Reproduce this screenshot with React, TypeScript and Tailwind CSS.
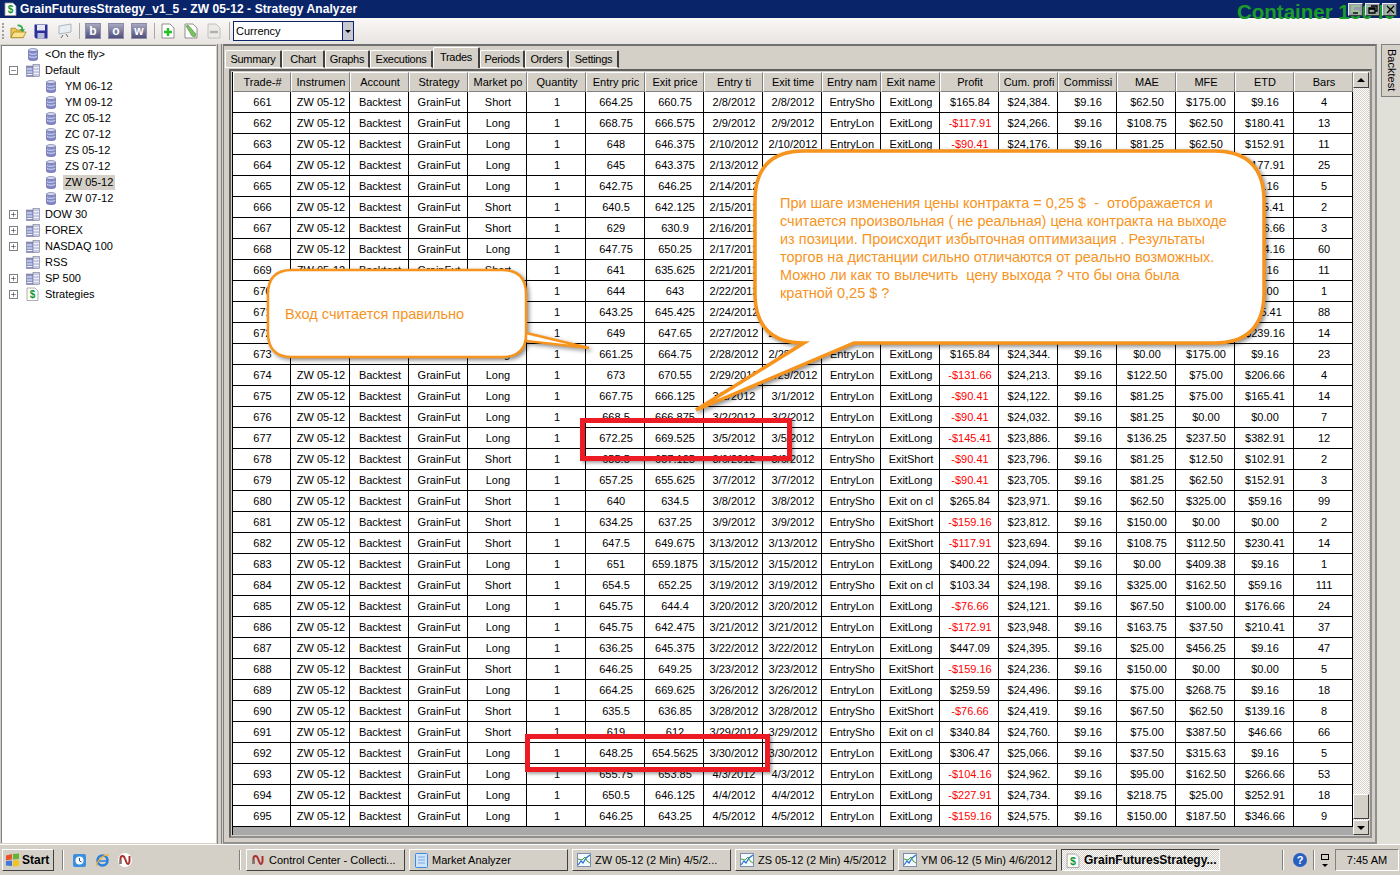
import { Minus, Plus } from "lucide-react";

// id, position, entry, exit, entry time, exit time, entry name, exit name, profit, cum, mae, mfe, etd, bars
const trades: string[][] = [
  ["661", "Short", "664.25", "660.75", "2/8/2012", "2/8/2012", "EntrySho", "ExitLong", "$165.84", "$24,384.", "$62.50", "$175.00", "$9.16", "4"],
  ["662", "Long", "668.75", "666.575", "2/9/2012", "2/9/2012", "EntryLon", "ExitLong", "-$117.91", "$24,266.", "$108.75", "$62.50", "$180.41", "13"],
  ["663", "Long", "648", "646.375", "2/10/2012", "2/10/2012", "EntryLon", "ExitLong", "-$90.41", "$24,176.", "$81.25", "$62.50", "$152.91", "11"],
  ["664", "Long", "645", "643.375", "2/13/2012", "2/13/2012", "EntryLon", "ExitLong", "-$90.41", "$24,086.", "$81.25", "$87.50", "$177.91", "25"],
  ["665", "Long", "642.75", "646.25", "2/14/2012", "2/14/2012", "EntryLon", "ExitLong", "$165.84", "$24,252.", "$25.00", "$175.00", "$9.16", "5"],
  ["666", "Short", "640.5", "642.125", "2/15/2012", "2/15/2012", "EntrySho", "ExitShort", "-$90.41", "$24,161.", "$81.25", "$25.00", "$115.41", "2"],
  ["667", "Short", "629", "630.9", "2/16/2012", "2/16/2012", "EntrySho", "ExitShort", "-$104.16", "$24,057.", "$95.00", "$62.50", "$166.66", "3"],
  ["668", "Long", "647.75", "650.25", "2/17/2012", "2/17/2012", "EntryLon", "ExitLong", "$115.84", "$24,173.", "$50.00", "$125.00", "$134.16", "60"],
  ["669", "Short", "641", "635.625", "2/21/2012", "2/21/2012", "EntrySho", "ExitShort", "$259.59", "$24,432.", "$12.50", "$268.75", "$9.16", "11"],
  ["670", "Long", "644", "643", "2/22/2012", "2/22/2012", "EntryLon", "ExitLong", "-$59.16", "$24,373.", "$50.00", "$0.00", "$0.00", "1"],
  ["671", "Short", "643.25", "645.425", "2/24/2012", "2/24/2012", "EntrySho", "ExitShort", "-$117.91", "$24,255.", "$108.75", "$12.50", "$95.41", "88"],
  ["672", "Long", "649", "647.65", "2/27/2012", "2/27/2012", "EntryLon", "ExitLong", "-$76.66", "$24,178.", "$67.50", "$162.50", "$239.16", "14"],
  ["673", "Long", "661.25", "664.75", "2/28/2012", "2/28/2012", "EntryLon", "ExitLong", "$165.84", "$24,344.", "$0.00", "$175.00", "$9.16", "23"],
  ["674", "Long", "673", "670.55", "2/29/2012", "2/29/2012", "EntryLon", "ExitLong", "-$131.66", "$24,213.", "$122.50", "$75.00", "$206.66", "4"],
  ["675", "Long", "667.75", "666.125", "3/1/2012", "3/1/2012", "EntryLon", "ExitLong", "-$90.41", "$24,122.", "$81.25", "$75.00", "$165.41", "14"],
  ["676", "Long", "668.5", "666.875", "3/2/2012", "3/2/2012", "EntryLon", "ExitLong", "-$90.41", "$24,032.", "$81.25", "$0.00", "$0.00", "7"],
  ["677", "Long", "672.25", "669.525", "3/5/2012", "3/5/2012", "EntryLon", "ExitLong", "-$145.41", "$23,886.", "$136.25", "$237.50", "$382.91", "12"],
  ["678", "Short", "655.5", "657.125", "3/6/2012", "3/6/2012", "EntrySho", "ExitShort", "-$90.41", "$23,796.", "$81.25", "$12.50", "$102.91", "2"],
  ["679", "Long", "657.25", "655.625", "3/7/2012", "3/7/2012", "EntryLon", "ExitLong", "-$90.41", "$23,705.", "$81.25", "$62.50", "$152.91", "3"],
  ["680", "Short", "640", "634.5", "3/8/2012", "3/8/2012", "EntrySho", "Exit on cl", "$265.84", "$23,971.", "$62.50", "$325.00", "$59.16", "99"],
  ["681", "Short", "634.25", "637.25", "3/9/2012", "3/9/2012", "EntrySho", "ExitShort", "-$159.16", "$23,812.", "$150.00", "$0.00", "$0.00", "2"],
  ["682", "Short", "647.5", "649.675", "3/13/2012", "3/13/2012", "EntrySho", "ExitShort", "-$117.91", "$23,694.", "$108.75", "$112.50", "$230.41", "14"],
  ["683", "Long", "651", "659.1875", "3/15/2012", "3/15/2012", "EntryLon", "ExitLong", "$400.22", "$24,094.", "$0.00", "$409.38", "$9.16", "1"],
  ["684", "Short", "654.5", "652.25", "3/19/2012", "3/19/2012", "EntrySho", "Exit on cl", "$103.34", "$24,198.", "$325.00", "$162.50", "$59.16", "111"],
  ["685", "Long", "645.75", "644.4", "3/20/2012", "3/20/2012", "EntryLon", "ExitLong", "-$76.66", "$24,121.", "$67.50", "$100.00", "$176.66", "24"],
  ["686", "Long", "645.75", "642.475", "3/21/2012", "3/21/2012", "EntryLon", "ExitLong", "-$172.91", "$23,948.", "$163.75", "$37.50", "$210.41", "37"],
  ["687", "Long", "636.25", "645.375", "3/22/2012", "3/22/2012", "EntryLon", "ExitLong", "$447.09", "$24,395.", "$25.00", "$456.25", "$9.16", "47"],
  ["688", "Short", "646.25", "649.25", "3/23/2012", "3/23/2012", "EntrySho", "ExitShort", "-$159.16", "$24,236.", "$150.00", "$0.00", "$0.00", "5"],
  ["689", "Long", "664.25", "669.625", "3/26/2012", "3/26/2012", "EntryLon", "ExitLong", "$259.59", "$24,496.", "$75.00", "$268.75", "$9.16", "18"],
  ["690", "Short", "635.5", "636.85", "3/28/2012", "3/28/2012", "EntrySho", "ExitShort", "-$76.66", "$24,419.", "$67.50", "$62.50", "$139.16", "8"],
  ["691", "Short", "619", "612", "3/29/2012", "3/29/2012", "EntrySho", "Exit on cl", "$340.84", "$24,760.", "$75.00", "$387.50", "$46.66", "66"],
  ["692", "Long", "648.25", "654.5625", "3/30/2012", "3/30/2012", "EntryLon", "ExitLong", "$306.47", "$25,066.", "$37.50", "$315.63", "$9.16", "5"],
  ["693", "Long", "655.75", "653.85", "4/3/2012", "4/3/2012", "EntryLon", "ExitLong", "-$104.16", "$24,962.", "$95.00", "$162.50", "$266.66", "53"],
  ["694", "Long", "650.5", "646.125", "4/4/2012", "4/4/2012", "EntryLon", "ExitLong", "-$227.91", "$24,734.", "$218.75", "$25.00", "$252.91", "18"],
  ["695", "Long", "646.25", "643.25", "4/5/2012", "4/5/2012", "EntryLon", "ExitLong", "-$159.16", "$24,575.", "$150.00", "$187.50", "$346.66", "9"],
];

const headers = ["Trade-#", "Instrumen", "Account", "Strategy", "Market po", "Quantity", "Entry pric", "Exit price", "Entry ti", "Exit time", "Entry nam", "Exit name", "Profit", "Cum. profi", "Commissi", "MAE", "MFE", "ETD", "Bars"];

const tabs = [
  { label: "Summary", width: "w-[57px]" },
  { label: "Chart", width: "w-[43px]" },
  { label: "Graphs", width: "w-[45px]" },
  { label: "Executions", width: "w-[63px]" },
  { label: "Trades", width: "w-[47px]", active: true },
  { label: "Periods", width: "w-[45px]" },
  { label: "Orders", width: "w-[44px]" },
  { label: "Settings", width: "w-[50px]" },
];

const treeItems = [
  { label: "<On the fly>", icon: "db", depth: 0 },
  { label: "Default", icon: "group", depth: 0, toggle: "minus" },
  { label: "YM 06-12", icon: "db", depth: 1 },
  { label: "YM 09-12", icon: "db", depth: 1 },
  { label: "ZC 05-12", icon: "db", depth: 1 },
  { label: "ZC 07-12", icon: "db", depth: 1 },
  { label: "ZS 05-12", icon: "db", depth: 1 },
  { label: "ZS 07-12", icon: "db", depth: 1 },
  { label: "ZW 05-12", icon: "db", depth: 1, selected: true },
  { label: "ZW 07-12", icon: "db", depth: 1 },
  { label: "DOW 30", icon: "group", depth: 0, toggle: "plus" },
  { label: "FOREX", icon: "group", depth: 0, toggle: "plus" },
  { label: "NASDAQ 100", icon: "group", depth: 0, toggle: "plus" },
  { label: "RSS", icon: "group", depth: 0 },
  { label: "SP 500", icon: "group", depth: 0, toggle: "plus" },
  { label: "Strategies", icon: "dollar", depth: 0, toggle: "plus" },
];

function DbIcon() {
  return (
    <svg width="10" height="13" viewBox="0 0 10 13">
      <path d="M0.5 2v9c0 1 2 1.500 4.500 1.500S9.500 12 9.500 11V2z" fill="#8088c8" stroke="#5a6298" strokeWidth="0.6" />
      <ellipse cx="5" cy="2" rx="4.500" ry="1.500" fill="#d8dcf4" stroke="#5a6298" strokeWidth="0.6" />
      <path d="M1 5.500c1 1 7 1 8 0M1 8.500c1 1 7 1 8 0" fill="none" stroke="#dfe2f5" strokeWidth="0.9" />
    </svg>
  );
}

function GroupIcon() {
  return (
    <svg width="14" height="13" viewBox="0 0 14 13">
      <rect x="0.500" y="2" width="6.500" height="10.500" fill="#8c94c8" stroke="#667" strokeWidth="0.5" />
      <rect x="7" y="0.500" width="6.500" height="12" fill="#c6cae6" stroke="#667" strokeWidth="0.5" />
      <path d="M1 5h5.500M1 8h5.500M1 10.500h5.500M7.500 3.500H13M7.500 6.500H13M7.500 9.500H13" stroke="#eef" strokeWidth="1" />
    </svg>
  );
}

function DollarDoc({ size = 14 }: { size?: number }) {
  return (
    <svg width={size - 1} height={size} viewBox="0 0 13 14">
      <path d="M1 1h8l3 3v9.500H1z" fill="#fff" stroke="#9a9a9a" strokeWidth="0.8" />
      <text x="6.500" y="11" textAnchor="middle" fontSize="10" fontWeight="700" fill="#109a30" fontFamily="Liberation Sans">$</text>
    </svg>
  );
}

function Expander({ kind }: { kind: string }) {
  return (
    <span className="flex h-[9px] w-[9px] items-center justify-center border border-[#808080] bg-white text-black">
      {kind === "plus" ? <Plus size={7} strokeWidth={1.500} /> : <Minus size={7} strokeWidth={1.500} />}
    </span>
  );
}

function TreeRow({ item }: { item: (typeof treeItems)[number] }) {
  return (
    <div className="flex h-4 items-center">
      <span className="ml-[7px] flex w-[17px] shrink-0 items-center">{item.toggle && <Expander kind={item.toggle} />}</span>
      {item.depth === 1 && <span className="w-[20px] shrink-0" />}
      <span className="flex w-[17px] shrink-0 justify-start">
        {item.icon === "db" && <span className={item.depth === 0 ? "ml-[2px]" : ""}><DbIcon /></span>}
        {item.icon === "group" && <GroupIcon />}
        {item.icon === "dollar" && <DollarDoc />}
      </span>
      <span className={`whitespace-nowrap px-[2px] leading-[15px] ${item.selected ? "bg-[#d4d0c8]" : ""}`}>{item.label}</span>
    </div>
  );
}

function LetterButton({ letter }: { letter: string }) {
  return (
    <span className="flex h-[16px] w-[16px] items-center justify-center border border-[#8c8ca8] bg-gradient-to-b from-[#a8a8c0] to-[#50507c] text-[12px] font-bold leading-none text-white">
      {letter}
    </span>
  );
}

function DocIcon({ mark }: { mark: "plus" | "pencil" | "minus" }) {
  const disabled = mark === "minus";
  return (
    <svg width="14" height="16" viewBox="0 0 14 16">
      <path d="M1 1h8l4 4v10H1z" fill={disabled ? "#eceae6" : "#fff"} stroke={disabled ? "#b8b8b8" : "#777"} strokeWidth="0.8" />
      {mark === "plus" && <path d="M7 5v8M3 9h8" stroke="#22c020" strokeWidth="2.400" />}
      {mark === "minus" && <path d="M3 9h8" stroke="#b0b0b0" strokeWidth="2.400" />}
      {mark === "pencil" && <path d="M2 3l2-1 8 9-1 3-3-1z" fill="#7cc060" stroke="#4a8a3a" strokeWidth="0.6" />}
    </svg>
  );
}

function ChartIcon() {
  return (
    <svg width="14" height="14" viewBox="0 0 14 14">
      <rect x="0.500" y="0.500" width="13" height="13" fill="#f4f8ff" stroke="#7a8fb0" />
      <path d="M1 12l3-4 2 2 3-5 4-3" fill="none" stroke="#2a6fd0" strokeWidth="1.200" />
      <path d="M1 6l4 1 3-3 2 4 3 2" fill="none" stroke="#3ca040" strokeWidth="1" />
    </svg>
  );
}

function NinjaIcon({ ring }: { ring?: boolean }) {
  return (
    <svg width="14" height="14" viewBox="0 0 14 14">
      {ring && <circle cx="7" cy="7" r="7" fill="#fff" />}
      <path d="M2.500 11V5.500C2.500 2 6 2 7 5.500l1.500 4C9.500 12 11.500 11 11.500 8V3" fill="none" stroke="#a83230" strokeWidth="2" />
      <path d="M2.500 11V7" stroke="#777" strokeWidth="2" />
    </svg>
  );
}

function StartFlag() {
  return (
    <svg width="15" height="14" viewBox="0 0 15 14">
      <path d="M1 2.500l6-1.500v5.500l-6 .8z" fill="#e8532b" />
      <path d="M8 1l6-.5v5.500l-6 .5z" fill="#66b32e" />
      <path d="M1 8l6-.5v5.500l-6-.5z" fill="#3f78d8" />
      <path d="M8 7.500l6-.5v6l-6 .5z" fill="#f4c21e" />
    </svg>
  );
}

function TaskButton({ icon, label, active }: { icon: React.ReactNode; label: string; active?: boolean }) {
  return (
    <div
      className={`flex h-[22px] w-[159px] shrink-0 items-center gap-[3px] overflow-hidden whitespace-nowrap pl-[3px] ${
        active
          ? "border border-t-[#404040] border-l-[#404040] border-r-white border-b-white bg-[repeating-conic-gradient(#d4d0c8_0_25%,#ffffff_0_50%)] bg-[length:2px_2px] text-[12px] font-bold"
          : "border border-t-white border-l-white border-r-[#404040] border-b-[#404040] bg-[#d4d0c8]"
      }`}
    >
      <span className="flex w-[16px] shrink-0 justify-center">{icon}</span>
      <span>{label}</span>
    </div>
  );
}

function Cell({ children, red, wide }: { children: React.ReactNode; red?: boolean; wide?: string }) {
  return (
    <div className={`flex shrink-0 items-center justify-center overflow-hidden whitespace-nowrap border-r border-black pl-[2px] ${wide ?? "w-[59px]"} ${red ? "text-[#ff0000]" : ""}`}>
      {children}
    </div>
  );
}

function TradeRow({ t }: { t: string[] }) {
  const [id, pos, entry, exit, entryT, exitT, entryN, exitN, profit, cum, mae, mfe, etd, bars] = t;
  return (
    <div className="flex h-[21px] border-b border-black bg-white">
      <Cell wide="w-[58px]">{id}</Cell>
      <Cell>ZW 05-12</Cell>
      <Cell>Backtest</Cell>
      <Cell>GrainFut</Cell>
      <Cell>{pos}</Cell>
      <Cell>1</Cell>
      <Cell>{entry}</Cell>
      <Cell>{exit}</Cell>
      <Cell>{entryT}</Cell>
      <Cell>{exitT}</Cell>
      <Cell>{entryN}</Cell>
      <Cell>{exitN}</Cell>
      <Cell red={profit.startsWith("-")}>{profit}</Cell>
      <Cell>{cum}</Cell>
      <Cell>$9.16</Cell>
      <Cell>{mae}</Cell>
      <Cell>{mfe}</Cell>
      <Cell>{etd}</Cell>
      <Cell>{bars}</Cell>
    </div>
  );
}

const raised = "border border-t-white border-l-white border-r-[#404040] border-b-[#404040] bg-[#d4d0c8]";

function ScrollBar() {
  return (
    <div className="flex w-[16px] shrink-0 flex-col bg-[repeating-conic-gradient(#d4d0c8_0_25%,#ffffff_0_50%)] bg-[length:2px_2px]">
      <div className={`flex h-[16px] items-center justify-center ${raised}`}>
        <span className="h-0 w-0 border-x-[4px] border-b-[4px] border-x-transparent border-b-black" />
      </div>
      <div className="flex-1" />
      <div className={`h-[25px] ${raised}`} />
      <div className={`mt-[1px] flex h-[15px] items-center justify-center ${raised}`}>
        <span className="h-0 w-0 border-x-[4px] border-t-[4px] border-x-transparent border-t-black" />
      </div>
    </div>
  );
}

function SmallCallout() {
  return (
    <div className="absolute left-[260px] top-[262px] h-[110px] w-[340px]">
      <svg width="340" height="110" viewBox="0 0 340 110" className="absolute inset-0 drop-shadow-[2px_2px_2px_rgba(0,0,0,0.45)]">
        <path
          d="M32 8H242Q266 8 266 32V71L329 86L266 79V72Q266 95 242 95H32Q8 95 8 71V32Q8 8 32 8Z"
          fill="#fff"
          stroke="#f7941e"
          strokeWidth="2.500"
        />
      </svg>
      <div className="absolute left-[25px] top-[43px] whitespace-pre text-[14.500px] leading-[18px] text-[#f7941e]">Вход считается правильно</div>
    </div>
  );
}

function BigCallout() {
  return (
    <div className="absolute left-[690px] top-[140px] h-[280px] w-[590px]">
      <svg width="590" height="280" viewBox="0 0 590 280" className="absolute inset-0 drop-shadow-[2px_2px_2px_rgba(0,0,0,0.45)]">
        <path
          d="M114 11H524Q574 11 574 61V153Q574 203 524 203H164L6 270L114 203Q65 203 65 153V61Q65 11 114 11Z"
          fill="#fff"
          stroke="#f7941e"
          strokeWidth="3.500"
        />
      </svg>
      <div className="absolute left-[90px] top-[54px] whitespace-pre text-[14.500px] leading-[18px] text-[#f7941e]">
        {"При шаге изменения цены контракта = 0,25 $  -  отображается и\nсчитается произвольная ( не реальная) цена контракта на выходе\nиз позиции. Происходит избыточная оптимизация . Результаты\nторгов на дистанции сильно отличаются от реально возможных.\nМожно ли как то вылечить  цену выхода ? что бы она была\nкратной 0,25 $ ?"}
      </div>
    </div>
  );
}

export default function App() {
  return (
    <div className="relative flex h-[875px] w-[1400px] flex-col overflow-hidden bg-[#d4d0c8] text-[11px] leading-none text-black [font-family:'Liberation_Sans',Arial,sans-serif]">
      {/* title bar */}
      <div className="relative flex h-[18px] shrink-0 items-center gap-[3px] bg-[#0a246a] pl-[4px]">
        <DollarDoc size={14} />
        <span className="whitespace-nowrap text-[12px] font-bold tracking-[0.1px] text-white">GrainFuturesStrategy_v1_5 - ZW 05-12 - Strategy Analyzer</span>
        <span className="absolute left-[1237px] top-[1px] whitespace-nowrap text-[20.500px] font-bold leading-[22px] text-[#1a9c2a]">Container 15040</span>
        <div className="absolute right-[3px] top-[3px] flex gap-[2px]">
          {[
            "M3 9h5",
            "M4 2h6v5H8M2 4h6v5H2zM2 5h6",
            "M3 2l7 7M10 2l-7 7",
          ].map((d) => (
            <span key={d} className="flex h-[13px] w-[15px] items-center justify-center border border-t-white/80 border-l-white/80 border-r-[#404040] border-b-[#404040] bg-[#d4d0c8]/70">
              <svg width="12" height="11" viewBox="0 0 12 11">
                <path d={d} fill="none" stroke="#000" strokeWidth="1.300" />
              </svg>
            </span>
          ))}
        </div>
      </div>

      {/* toolbar */}
      <div className="flex h-[26px] shrink-0 items-center bg-gradient-to-b from-[#faf8f6] to-[#e8e4e2] pl-[2px]">
        <span className="mr-[6px] h-[16px] w-[2px] border-l-2 border-dotted border-[#a0a0a0]" />
        <svg width="17" height="17" viewBox="0 0 18 17" className="mr-[7px]">
          <path d="M1 5h5l1 2h7v8H1z" fill="#f0c850" stroke="#a08020" strokeWidth="0.8" />
          <path d="M1 15l3-6h13l-3 6z" fill="#fbe38c" stroke="#a08020" strokeWidth="0.8" />
          <path d="M8 1c4 0 6 2 6 5h2l-3 3-3-3h2c0-2-1-3-4-3z" fill="#2fa84a" />
        </svg>
        <svg width="14" height="15" viewBox="0 0 14 15" className="mr-[10px]">
          <path d="M0.500 0.500h13v14H2l-1.500-1.500z" fill="#2a2f9a" />
          <rect x="3" y="1" width="8" height="5.500" fill="#e8e8f4" />
          <rect x="3.500" y="9" width="7" height="5.500" fill="#b8bcd8" />
        </svg>
        <svg width="14" height="16" viewBox="0 0 14 16" className="mr-[7px]">
          <path d="M1 3l12-2v8l-12 2z" fill="#e8eef4" stroke="#a0a8b0" strokeWidth="0.8" />
          <path d="M5 12l-2 3M8 11l2 3" stroke="#666" strokeWidth="1" />
        </svg>
        <span className="mr-[5px] h-[16px] w-px bg-[#a8a8a8]" />
        <div className="flex gap-[7px]">
          <LetterButton letter="b" />
          <LetterButton letter="o" />
          <LetterButton letter="w" />
        </div>
        <span className="ml-[7px] mr-[6px] h-[16px] w-px bg-[#a8a8a8]" />
        <div className="flex gap-[9px]">
          <DocIcon mark="plus" />
          <DocIcon mark="pencil" />
          <DocIcon mark="minus" />
        </div>
        <span className="ml-[8px] mr-[3px] h-[18px] w-px bg-[#a8a8a8]" />
        <div className="flex h-[20px] w-[121px] items-center border border-[#0a246a] bg-white pl-[2px]">
          <span className="flex-1">Currency</span>
          <span className="flex h-full w-[11px] items-center justify-center border-l border-[#0a246a] bg-[#c8c8d0]">
            <span className="h-0 w-0 border-x-[3px] border-t-[3px] border-x-transparent border-t-black" />
          </span>
        </div>
      </div>

      {/* main area */}
      <div className="flex h-[800px] shrink-0">
        <div className="ml-[1px] mt-[1px] h-[798px] w-[215px] shrink-0 border-l border-t border-[#808080] bg-white">
          {treeItems.map((item) => (
            <TreeRow key={item.label} item={item} />
          ))}
        </div>
        <div className="mx-[1px] w-[5px] shrink-0 border-x border-[#808080]" />

        <div className="flex w-[1154px] shrink-0 flex-col border-l border-t-2 border-r-2 border-b-2 border-t-[#707070] border-l-[#808080] border-r-[#909090] border-b-[#909090] pl-[2px]">
          <div className="-ml-[1px] flex h-[22px] shrink-0 items-end tracking-[-0.3px]">
            {tabs.map((tab) =>
              tab.active ? (
                <div key={tab.label} className={`relative z-10 flex h-[21px] ${tab.width} shrink-0 items-start justify-center rounded-t-[2px] border-l border-t border-r-2 border-white border-r-[#404040] bg-[#d4d0c8] pt-[4px]`}>
                  {tab.label}
                </div>
              ) : (
                <div key={tab.label} className={`flex h-[18px] ${tab.width} shrink-0 items-center justify-center rounded-t-[2px] border-b border-l border-t border-r-2 border-white border-r-[#404040] bg-[#d4d0c8]`}>
                  {tab.label}
                </div>
              ),
            )}
          </div>
          <div className="ml-[3px] mt-[1px] flex h-[769px] w-[1143px] flex-col border-2 border-t-[#606060] border-l-[#606060] border-r-[#909090] border-b-[#909090] p-[1px]">
            <div className="flex h-[763px]">
              <div className="flex w-[1121px] shrink-0 flex-col border-l border-black bg-[#a9a9a9]">
                <div className="flex h-[20px] shrink-0">
                  {headers.map((h, i) => (
                    <div key={h} className={`flex shrink-0 items-center justify-center overflow-hidden whitespace-nowrap border border-t-white border-l-white border-r-[#808080] border-b-[#808080] bg-[#d4d0c8] pl-[1px] ${i === 0 ? "w-[58px]" : "w-[59px]"}`}>
                      {h}
                    </div>
                  ))}
                </div>
                {trades.map((t) => (
                  <TradeRow key={t[0]} t={t} />
                ))}
              </div>
              <ScrollBar />
            </div>
          </div>
        </div>

        <div className="flex-1 bg-[#e0dfd8] pl-[4px]">
          <div className="flex h-[53px] w-[19px] items-center justify-center border-b border-l border-t border-[#808080] bg-[#d4d0c8] [writing-mode:vertical-rl]">Backtest</div>
        </div>
      </div>

      {/* taskbar */}
      <div className="flex h-[31px] shrink-0 items-center border-t border-white bg-[#d4d0c8]">
        <div className="ml-[2px] flex h-[22px] w-[52px] items-center gap-[2px] border border-t-white border-l-white border-r-[#404040] border-b-[#404040] pl-[2px] text-[12px] font-bold">
          <StartFlag />
          <span>Start</span>
        </div>
        <span className="ml-[8px] h-[20px] w-[2px] border-l border-r border-l-[#808080] border-r-white" />
        <div className="ml-[8px] flex w-[61px] items-center gap-[8px]">
          <svg width="15" height="15" viewBox="0 0 15 15">
            <rect x="1" y="1" width="13" height="13" rx="2" fill="#3a8fe0" />
            <circle cx="7.500" cy="7.500" r="4" fill="#fff" />
            <path d="M7.500 5v3l2 1" fill="none" stroke="#1a4fa0" />
          </svg>
          <svg width="15" height="15" viewBox="0 0 15 15">
            <circle cx="7.500" cy="7.500" r="5" fill="none" stroke="#2a7fe0" strokeWidth="2.500" />
            <path d="M3 8h9" stroke="#2a7fe0" strokeWidth="1.500" />
            <path d="M1 13C3 6 9 1 14 2" fill="none" stroke="#f2b01e" strokeWidth="1.200" />
          </svg>
          <NinjaIcon ring />
        </div>
        <span className="ml-[106px] mr-[5px] h-[20px] w-[2px] border-l border-r border-l-[#808080] border-r-white" />
        <div className="flex gap-[4px]">
          <TaskButton icon={<NinjaIcon />} label="Control Center - Collecti..." />
          <TaskButton
            icon={
              <svg width="13" height="15" viewBox="0 0 13 15">
                <rect x="0.500" y="0.500" width="12" height="14" rx="1" fill="#cfe4fb" stroke="#3a8ae0" />
                <path d="M3 4h7M3 7h7M3 10h7" stroke="#7aa8de" />
              </svg>
            }
            label="Market Analyzer"
          />
          <TaskButton icon={<ChartIcon />} label="ZW 05-12 (2 Min)  4/5/2..." />
          <TaskButton icon={<ChartIcon />} label="ZS 05-12 (2 Min)  4/5/2012" />
          <TaskButton icon={<ChartIcon />} label="YM 06-12 (5 Min)  4/6/2012" />
          <TaskButton icon={<DollarDoc size={15} />} label="GrainFuturesStrategy..." active />
        </div>
        <span className="ml-[62px] h-[20px] w-[2px] border-l border-r border-l-[#808080] border-r-white" />
        <span className="ml-[9px] flex h-[14px] w-[14px] items-center justify-center rounded-full bg-[#2a5fc0] text-[11px] font-bold text-white">?</span>
        <span className="ml-[6px] h-[20px] w-[2px] border-l border-r border-l-[#808080] border-r-white" />
        <div className="ml-[4px] flex w-[12px] flex-col items-center gap-[4px]">
          <span className="h-[6px] w-[8px] border border-black" />
          <span className="h-0 w-0 border-x-[3px] border-t-[3px] border-x-transparent border-t-black" />
        </div>
        <div className="ml-[4px] flex h-[22px] w-[64px] items-center justify-center border border-t-[#808080] border-l-[#808080] border-r-white border-b-white text-[11px]">7:45 AM</div>
      </div>

      {/* annotations drawn over the table */}
      <SmallCallout />
      <BigCallout />
      <div className="absolute left-[580px] top-[418px] h-[43px] w-[212px] border-[5px] border-[#ed1c24] shadow-[2px_2px_3px_rgba(0,0,0,0.35)]" />
      <div className="absolute left-[525px] top-[734px] h-[38px] w-[245px] border-[5px] border-[#ed1c24] shadow-[2px_2px_3px_rgba(0,0,0,0.35)]" />
    </div>
  );
}
